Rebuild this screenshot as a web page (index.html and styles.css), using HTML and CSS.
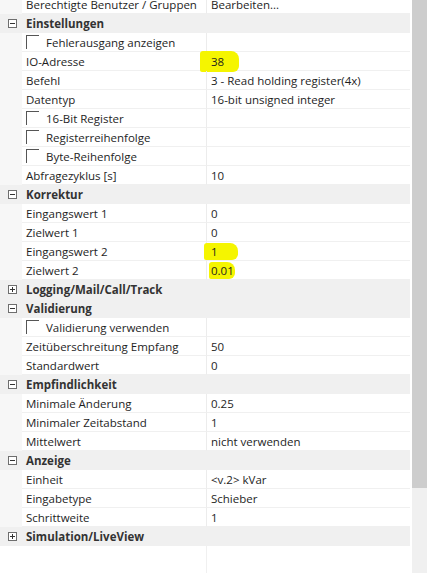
FILE: index.html
```html
<!DOCTYPE html>
<html lang="de">
<head>
    <meta charset="UTF-8">
    <title>Eigenschaften</title>
    <link rel="stylesheet" href="styles.css">
</head>
<body>
    <div class="panel">
        <div class="grid">
            <div class="row prop cut">
                <div class="gutter"></div>
                <div class="name">Berechtigte Benutzer / Gruppen</div>
                <div class="value">Bearbeiten...</div>
            </div>

            <div class="row cat"><span class="toggle minus"></span>Einstellungen</div>
            <div class="row prop">
                <div class="gutter"></div>
                <div class="name check"><span class="box"></span>Fehlerausgang anzeigen</div>
                <div class="value"></div>
            </div>
            <div class="row prop">
                <div class="gutter"></div>
                <div class="name">IO-Adresse</div>
                <div class="value"><span class="mark mark-38">38</span></div>
            </div>
            <div class="row prop">
                <div class="gutter"></div>
                <div class="name">Befehl</div>
                <div class="value">3 - Read holding register(4x)</div>
            </div>
            <div class="row prop">
                <div class="gutter"></div>
                <div class="name">Datentyp</div>
                <div class="value">16-bit unsigned integer</div>
            </div>
            <div class="row prop">
                <div class="gutter"></div>
                <div class="name check"><span class="box"></span>16-Bit Register</div>
                <div class="value"></div>
            </div>
            <div class="row prop">
                <div class="gutter"></div>
                <div class="name check"><span class="box"></span>Registerreihenfolge</div>
                <div class="value"></div>
            </div>
            <div class="row prop">
                <div class="gutter"></div>
                <div class="name check"><span class="box"></span>Byte-Reihenfolge</div>
                <div class="value"></div>
            </div>
            <div class="row prop">
                <div class="gutter"></div>
                <div class="name">Abfragezyklus [s]</div>
                <div class="value">10</div>
            </div>

            <div class="row cat"><span class="toggle minus"></span>Korrektur</div>
            <div class="row prop">
                <div class="gutter"></div>
                <div class="name">Eingangswert 1</div>
                <div class="value">0</div>
            </div>
            <div class="row prop">
                <div class="gutter"></div>
                <div class="name">Zielwert 1</div>
                <div class="value">0</div>
            </div>
            <div class="row prop">
                <div class="gutter"></div>
                <div class="name">Eingangswert 2</div>
                <div class="value"><span class="mark mark-1">1</span></div>
            </div>
            <div class="row prop">
                <div class="gutter"></div>
                <div class="name">Zielwert 2</div>
                <div class="value"><span class="mark mark-001">0.01</span></div>
            </div>

            <div class="row cat"><span class="toggle plus"></span>Logging/Mail/Call/Track</div>

            <div class="row cat"><span class="toggle minus"></span>Validierung</div>
            <div class="row prop">
                <div class="gutter"></div>
                <div class="name check"><span class="box"></span>Validierung verwenden</div>
                <div class="value"></div>
            </div>
            <div class="row prop">
                <div class="gutter"></div>
                <div class="name">Zeitüberschreitung Empfang</div>
                <div class="value">50</div>
            </div>
            <div class="row prop">
                <div class="gutter"></div>
                <div class="name">Standardwert</div>
                <div class="value">0</div>
            </div>

            <div class="row cat"><span class="toggle minus"></span>Empfindlichkeit</div>
            <div class="row prop">
                <div class="gutter"></div>
                <div class="name">Minimale Änderung</div>
                <div class="value">0.25</div>
            </div>
            <div class="row prop">
                <div class="gutter"></div>
                <div class="name">Minimaler Zeitabstand</div>
                <div class="value">1</div>
            </div>
            <div class="row prop">
                <div class="gutter"></div>
                <div class="name">Mittelwert</div>
                <div class="value">nicht verwenden</div>
            </div>

            <div class="row cat"><span class="toggle minus"></span>Anzeige</div>
            <div class="row prop">
                <div class="gutter"></div>
                <div class="name">Einheit</div>
                <div class="value">&lt;v.2&gt; kVar</div>
            </div>
            <div class="row prop">
                <div class="gutter"></div>
                <div class="name">Eingabetype</div>
                <div class="value">Schieber</div>
            </div>
            <div class="row prop">
                <div class="gutter"></div>
                <div class="name">Schrittweite</div>
                <div class="value">1</div>
            </div>

            <div class="row cat"><span class="toggle plus"></span>Simulation/LiveView</div>

            <div class="filler">
                <div class="filler-name"></div>
            </div>
        </div>

        <div class="scrollbar">
            <div class="thumb"></div>
            <div class="track"></div>
        </div>
    </div>
</body>
</html>
```

FILE: styles.css
```css
* {
    margin: 0;
    padding: 0;
    box-sizing: border-box;
}

body {
    background: #ffffff;
    font-family: 'Open Sans', 'Noto Sans', sans-serif;
    font-size: 11.5px;
    color: #1e1e1e;
    width: 430px;
    height: 573px;
    overflow: hidden;
}

.panel {
    display: flex;
    height: 573px;
}

.grid {
    width: 410px;
    display: flex;
    flex-direction: column;
    margin-top: -5px;
}

/* Zeilen */
.row {
    height: 19px;
    display: flex;
    align-items: center;
    flex-shrink: 0;
    white-space: nowrap;
}

.prop .gutter {
    width: 22px;
    height: 100%;
    background: #f7f7f7;
}

.prop .name {
    width: 185px;
    height: 100%;
    padding-left: 4px;
    display: flex;
    align-items: center;
    border-right: 1px solid #ececec;
    border-bottom: 1px solid #f0f0f0;
}

.prop .value {
    flex: 1;
    height: 100%;
    padding-left: 4px;
    display: flex;
    align-items: center;
    border-bottom: 1px solid #f0f0f0;
}

/* Kategorien */
.cat {
    background: #f0f0f0;
    font-weight: 700;
    color: #333333;
    padding-left: 8px;
}

.toggle {
    width: 9px;
    height: 9px;
    border: 1px solid #6e6e6e;
    background: #ffffff;
    margin-right: 9px;
    position: relative;
}

.toggle::before {
    content: "";
    position: absolute;
    left: 1px;
    top: 3px;
    width: 5px;
    height: 1px;
    background: #333333;
}

.plus::after {
    content: "";
    position: absolute;
    left: 3px;
    top: 1px;
    width: 1px;
    height: 5px;
    background: #333333;
}

/* Checkboxen */
.check {
    padding-left: 3px;
}

.box {
    width: 13px;
    height: 14px;
    border-top: 1px solid #555555;
    border-left: 1px solid #555555;
    margin-top: 2px;
    margin-right: 7px;
    align-self: flex-start;
}

/* Markierungen */
.mark {
    display: inline-block;
    background: #f5f500;
    border-radius: 3px 8px 6px 2px;
}

.mark-38 {
    margin-left: -11px;
    padding: 3px 15px 3px 11px;
}

.mark-1 {
    margin-left: -7px;
    padding: 1px 20px 1px 7px;
}

.mark-001 {
    margin-left: -2px;
    padding: 1px 1px 1px 2px;
}

/* Leerbereich */
.filler {
    flex: 1;
    display: flex;
}

.filler-name {
    width: 207px;
    border-right: 1px solid #f0f0f0;
}

/* Scrollleiste */
.scrollbar {
    width: 20px;
    display: flex;
    flex-direction: column;
    padding: 0 3px 0 2px;
}

.thumb {
    height: 488px;
    background: #cdcdcd;
}

.track {
    flex: 1;
    background: #f0f0f0;
}
```
